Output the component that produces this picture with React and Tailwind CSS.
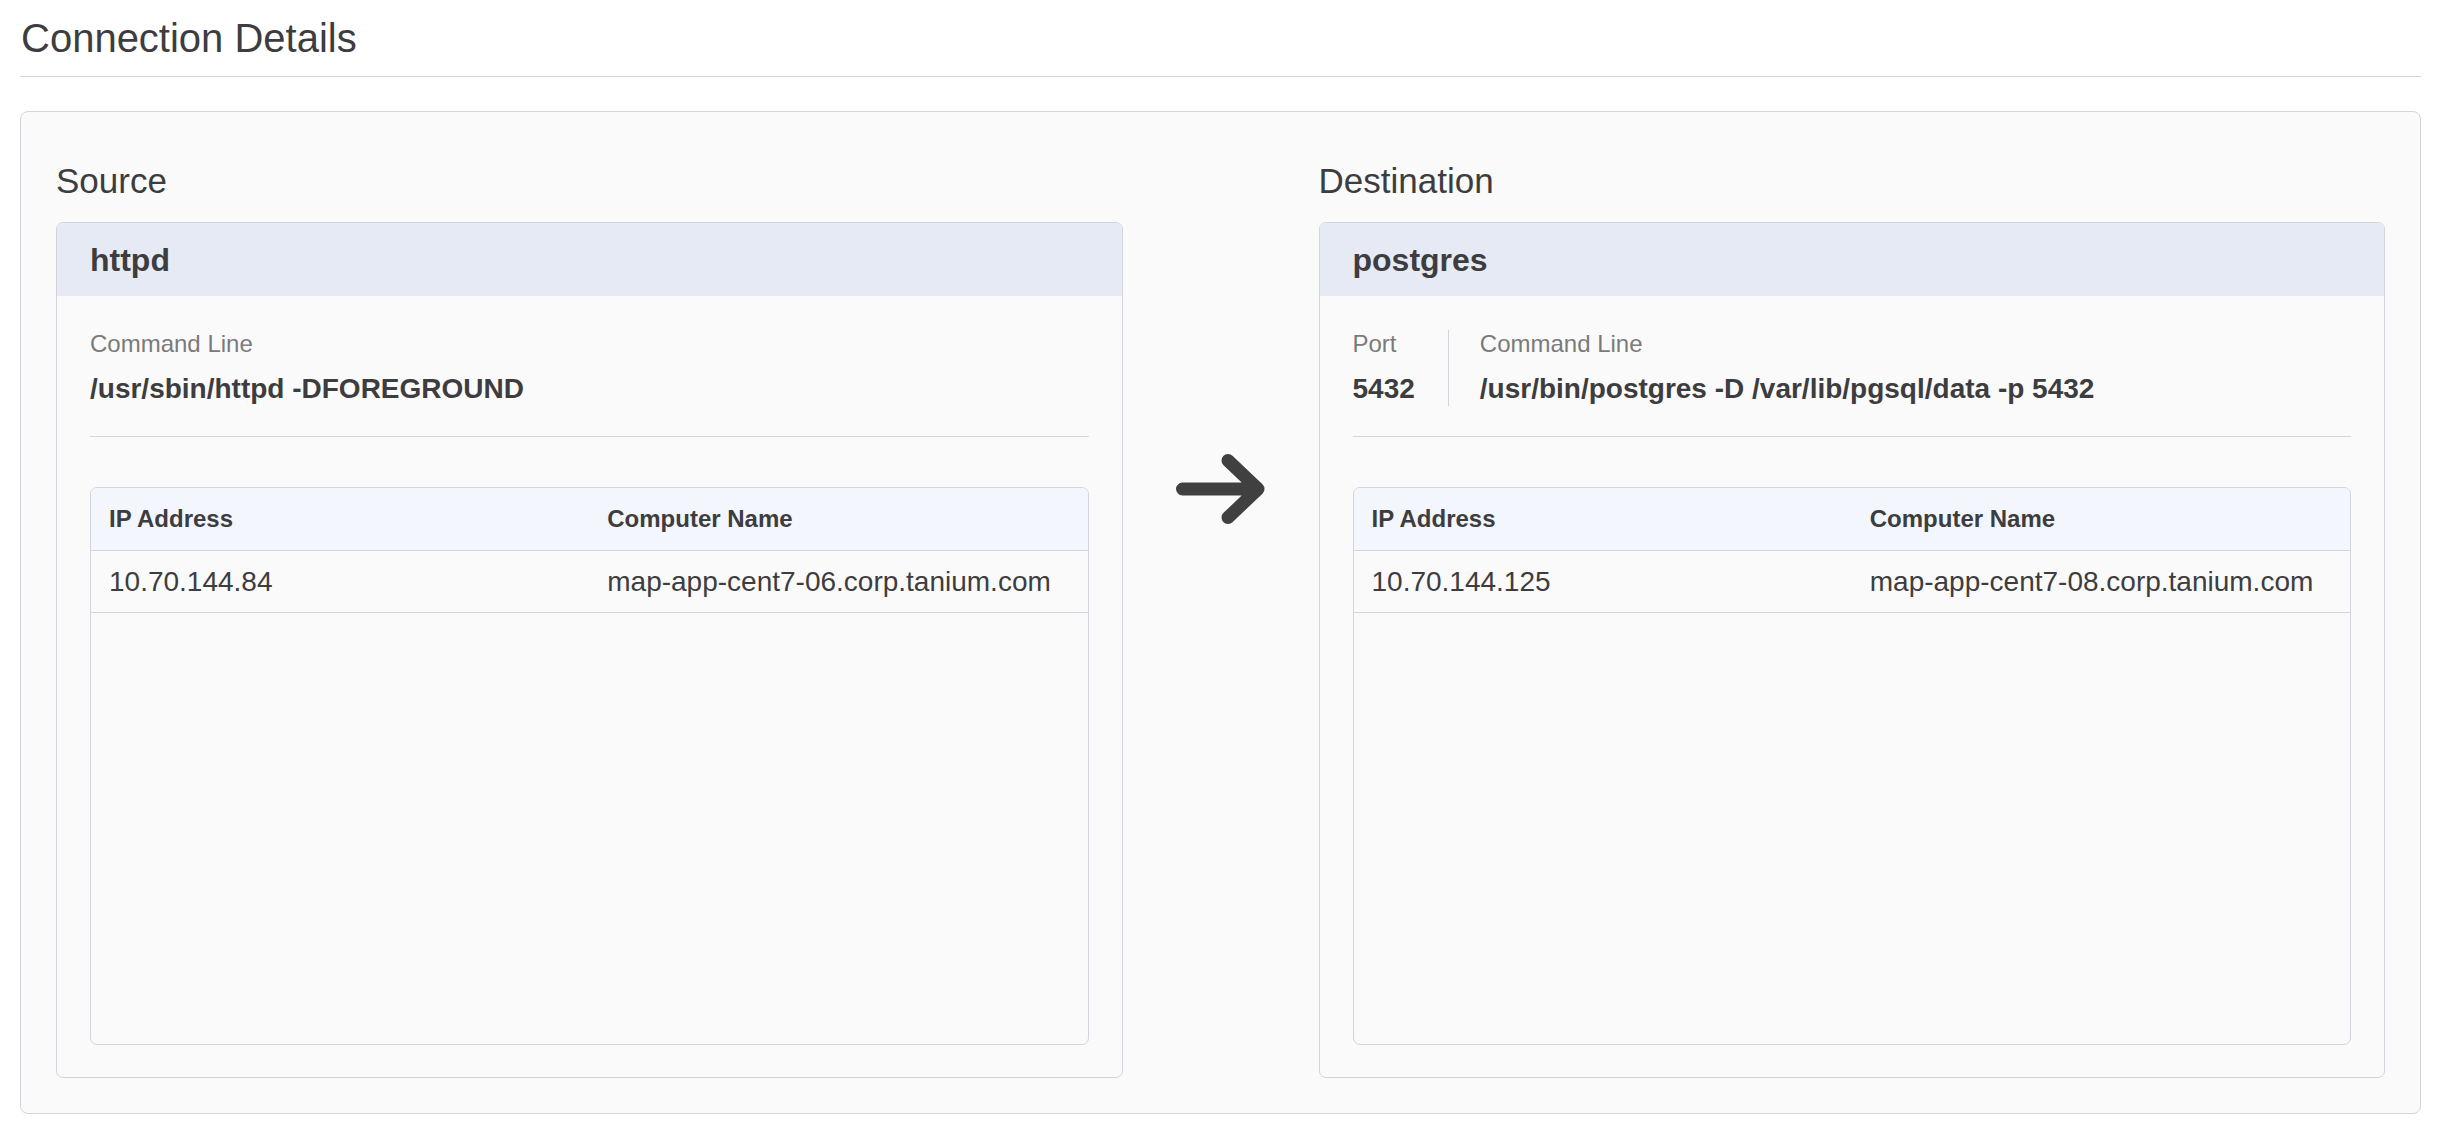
import React from "react";

const endpoints = [
  {
    title: "Source",
    process: "httpd",
    commandLine: "/usr/sbin/httpd -DFOREGROUND",
    rows: [{ ip: "10.70.144.84", name: "map-app-cent7-06.corp.tanium.com" }],
  },
  {
    title: "Destination",
    process: "postgres",
    port: "5432",
    commandLine: "/usr/bin/postgres -D /var/lib/pgsql/data -p 5432",
    rows: [{ ip: "10.70.144.125", name: "map-app-cent7-08.corp.tanium.com" }],
  },
];

const Field = ({ label, value, className = "" }) => (
  <div className={className}>
    <div className="text-[24px] leading-[28px] text-[#7a7a7a]">{label}</div>
    <div className="mt-[14px] text-[28px] leading-[34px] font-bold text-[#3d3d3f] whitespace-nowrap">{value}</div>
  </div>
);

const HostTable = ({ rows }) => (
  <div className="h-[558px] rounded-[7px] border border-[#d4d4dc] bg-[#fafafa] overflow-hidden">
    <div className="grid grid-cols-2 h-[63px] items-center bg-[#f3f6fd] border-b border-[#d4d4dc]">
      <div className="px-[18px] text-[24px] font-bold text-[#3d3d3f]">IP Address</div>
      <div className="px-[18px] text-[24px] font-bold text-[#3d3d3f]">Computer Name</div>
    </div>
    {rows.map((row) => (
      <div key={row.ip} className="grid grid-cols-2 h-[62px] items-center border-b border-[#d4d4dc]">
        <div className="px-[18px] text-[28px] text-[#3d3d3f]">{row.ip}</div>
        <div className="px-[18px] text-[28px] text-[#3d3d3f] whitespace-nowrap">{row.name}</div>
      </div>
    ))}
  </div>
);

const EndpointCard = ({ endpoint }) => (
  <div className="min-w-0">
    <h2 className="mt-[14px] text-[35px] leading-[40px] text-[#3d3d3f]">{endpoint.title}</h2>
    <div className="mt-[21px] rounded-[7px] border border-[#d4d4dc] bg-[#fafafa] overflow-hidden">
      <div className="flex h-[73px] items-center bg-[#e6eaf5] px-[33px]">
        <span className="text-[32px] font-bold text-[#3d3d3f]">{endpoint.process}</span>
      </div>
      <div className="px-[33px] pt-[34px] pb-[32px]">
        <div className="flex pb-[30px] border-b border-[#d6d6dc]">
          {endpoint.port && <Field label="Port" value={endpoint.port} className="pr-[33px]" />}
          <Field
            label="Command Line"
            value={endpoint.commandLine}
            className={endpoint.port ? "pl-[31px] border-l border-[#d4d4dc]" : ""}
          />
        </div>
        <div className="mt-[50px]">
          <HostTable rows={endpoint.rows} />
        </div>
      </div>
    </div>
  </div>
);

const ArrowRight = () => (
  <svg width="89" height="70" viewBox="0 0 89 70" fill="none">
    <path
      d="M6.5 35 H82 M52 6.5 L82 35 L52 63.5"
      stroke="#404040"
      strokeWidth="13"
      strokeLinecap="round"
      strokeLinejoin="round"
    />
  </svg>
);

export default function App() {
  const [source, destination] = endpoints;
  return (
    <div className="min-h-screen bg-white pl-[20px] pr-[23px] font-['Liberation_Sans',Arial,sans-serif]">
      <div className="pt-[14px] pb-[14px] border-b border-[#d6d6d9]">
        <h1 className="pl-[1px] text-[40px] leading-[48px] text-[#3d3d3f]">Connection Details</h1>
      </div>

      <div className="mt-[34px] rounded-[8px] border border-[#d4d4dc] bg-[#fafafa] p-[35px]">
        <div className="grid grid-cols-[1fr_196px_1fr]">
          <EndpointCard endpoint={source} />
          <div className="flex justify-center pt-[307px]">
            <ArrowRight />
          </div>
          <EndpointCard endpoint={destination} />
        </div>
      </div>
    </div>
  );
}
